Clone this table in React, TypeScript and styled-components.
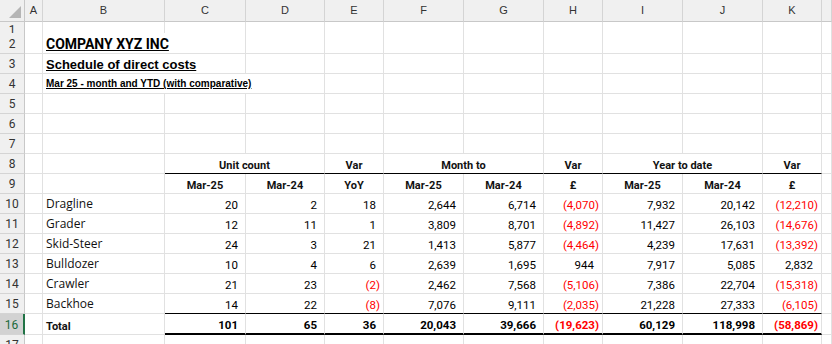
import React from "react";
import styled, { createGlobalStyle, css } from "styled-components";

const COLS = "25px 18px 122px 81px 79px 59px 80px 80px 59px 80px 80px 59px 1fr";
const GRID = "#e1e1e1";
const HEAD_LINE = "#d4d4d4";
const RED = "#ff0000";
const NARROW = `Roboto, "Liberation Sans", Arial, sans-serif`;
const SANS = `"Liberation Sans", Arial, sans-serif`;
const LABEL = `"Open Sans", "Noto Sans", sans-serif`;

const Global = createGlobalStyle`
  html, body { margin: 0; padding: 0; background: #fff; }
  body { overflow: hidden; }
`;

const Sheet = styled.div`
  width: 832px;
  height: 344px;
  overflow: hidden;
  background: #fff;
  display: flex;
  flex-direction: column;
`;

const Row = styled.div<{ $h: number }>`
  display: grid;
  grid-template-columns: ${COLS};
  height: ${(p) => p.$h}px;
  flex: none;
  overflow: hidden;
`;

const Corner = styled.div`
  box-sizing: border-box;
  background: #f0f0f0;
  border-right: 1px solid #c8c8c8;
  border-bottom: 1px solid #c8c8c8;
  display: flex;
  align-items: flex-end;
  justify-content: flex-end;
  padding: 0 3px 3px 0;
`;

const ColHead = styled.div`
  box-sizing: border-box;
  background: #f0f0f0;
  border-right: 1px solid ${HEAD_LINE};
  border-bottom: 1px solid #c8c8c8;
  display: flex;
  align-items: center;
  justify-content: center;
  font-family: ${SANS};
  font-size: 11px;
  line-height: 21px;
  color: #333;
`;

const RowHead = styled.div<{ $active?: boolean; $pb?: number }>`
  box-sizing: border-box;
  background: ${(p) => (p.$active ? "#d2d2d2" : "#f0f0f0")};
  border-right: ${(p) => (p.$active ? "2px solid #217346" : "1px solid #c8c8c8")};
  border-bottom: 1px solid ${HEAD_LINE};
  display: flex;
  align-items: flex-end;
  justify-content: center;
  padding-bottom: ${(p) => p.$pb ?? 1}px;
  font-family: ${NARROW};
  font-size: 12px;
  line-height: 16px;
  color: ${(p) => (p.$active ? "#1b6a3c" : "#333")};
`;

type Rule = "thin" | "thick";

const Cell = styled.div<{ $span?: number; $rule?: Rule }>`
  box-sizing: border-box;
  grid-column: span ${(p) => p.$span ?? 1};
  border-right: 1px solid ${GRID};
  border-bottom: 1px solid ${GRID};
  display: flex;
  align-items: flex-end;
  min-width: 0;
  white-space: nowrap;
  ${(p) => p.$rule === "thin" && css`border-bottom-color: #000;`}
  ${(p) => p.$rule === "thick" && css`border-bottom: 2px solid #000;`}
`;

const Title = styled(Cell)<{ $size: number; $lh: number; $narrow?: boolean; $pb?: number }>`
  overflow: visible;
  padding: 0 0 ${(p) => p.$pb ?? 0}px 3px;
  font-family: ${(p) => (p.$narrow ? NARROW : SANS)};
  font-weight: 700;
  font-size: ${(p) => p.$size}px;
  line-height: ${(p) => p.$lh}px;
  color: #000;
  text-decoration: underline;
  text-underline-offset: 1px;
`;

const Label = styled(Cell)<{ $bold?: boolean }>`
  padding: 0 0 ${(p) => (p.$bold ? 0 : 2)}px 3px;
  font-family: ${(p) => (p.$bold ? NARROW : LABEL)};
  font-weight: ${(p) => (p.$bold ? 700 : 400)};
  font-size: ${(p) => (p.$bold ? 11 : 12)}px;
  line-height: 15px;
  color: #111;
`;

const Head = styled(Cell)`
  justify-content: center;
  font-family: ${NARROW};
  font-weight: 700;
  font-size: 11px;
  line-height: 15px;
  color: #111;
`;

const Num = styled(Cell)<{ $neg?: boolean; $pad: number; $bold?: boolean }>`
  justify-content: flex-end;
  padding-right: ${(p) => p.$pad}px;
  font-family: ${NARROW};
  font-weight: ${(p) => (p.$bold ? 700 : 400)};
  font-size: 11.5px;
  line-height: 15px;
  color: ${(p) => (p.$neg ? RED : "#000")};
`;

const Triangle = () => (
  <svg width="12" height="12" viewBox="0 0 12 12">
    <polygon points="12,0 12,12 0,12" fill="#b5b5b5" />
  </svg>
);

const LETTERS = ["A", "B", "C", "D", "E", "F", "G", "H", "I", "J", "K", ""];

const fmt = (n: number) => {
  const s = Math.abs(n).toLocaleString("en-US");
  return n < 0 ? `(${s})` : s;
};

const DATA: { name: string; v: number[] }[] = [
  { name: "Dragline", v: [20, 2, 18, 2644, 6714, -4070, 7932, 20142, -12210] },
  { name: "Grader", v: [12, 11, 1, 3809, 8701, -4892, 11427, 26103, -14676] },
  { name: "Skid-Steer", v: [24, 3, 21, 1413, 5877, -4464, 4239, 17631, -13392] },
  { name: "Bulldozer", v: [10, 4, 6, 2639, 1695, 944, 7917, 5085, 2832] },
  { name: "Crawler", v: [21, 23, -2, 2462, 7568, -5106, 7386, 22704, -15318] },
  { name: "Backhoe", v: [14, 22, -8, 7076, 9111, -2035, 21228, 27333, -6105] },
];
const TOTAL = [101, 65, 36, 20043, 39666, -19623, 60129, 118998, -58869];

const padFor = (i: number, n: number) => {
  if (n < 0) return 3;
  if (i === 5 || i === 8) return 8;
  return 7;
};

const Blank = ({ count, rule }: { count: number; rule?: Rule }) => (
  <>
    {Array.from({ length: count }, (_, i) => (
      <Cell key={i} $rule={rule} />
    ))}
  </>
);

const EmptyRow = ({ n, h, pb }: { n: number; h: number; pb?: number }) => (
  <Row $h={h}>
    <RowHead $pb={pb}>{n}</RowHead>
    <Blank count={12} />
  </Row>
);

const NumCells = ({ v, bold, rule }: { v: number[]; bold?: boolean; rule?: Rule }) => (
  <>
    {v.map((n, i) => (
      <Num key={i} $neg={n < 0} $pad={padFor(i, n)} $bold={bold} $rule={rule}>
        {fmt(n)}
      </Num>
    ))}
  </>
);

export default function App() {
  return (
    <>
      <Global />
      <Sheet>
        <Row $h={22}>
          <Corner>
            <Triangle />
          </Corner>
          {LETTERS.map((l, i) => (
            <ColHead key={i}>{l}</ColHead>
          ))}
        </Row>

        <EmptyRow n={1} h={11} pb={4} />

        <Row $h={21}>
          <RowHead>2</RowHead>
          <Cell />
          <Title $span={2} $size={14} $lh={18} $narrow>
            COMPANY XYZ INC
          </Title>
          <Blank count={9} />
        </Row>

        <Row $h={20}>
          <RowHead>3</RowHead>
          <Cell />
          <Title $span={2} $size={13} $lh={17}>
            Schedule of direct costs
          </Title>
          <Blank count={9} />
        </Row>

        <Row $h={20}>
          <RowHead>4</RowHead>
          <Cell />
          <Title $span={3} $size={10} $lh={17} $pb={1}>
            Mar 25 - month and YTD (with comparative)
          </Title>
          <Blank count={8} />
        </Row>

        <EmptyRow n={5} h={20} />
        <EmptyRow n={6} h={20} />
        <EmptyRow n={7} h={20} />

        <Row $h={20}>
          <RowHead>8</RowHead>
          <Blank count={2} />
          <Head $span={2} $rule="thin">Unit count</Head>
          <Head $rule="thin">Var</Head>
          <Head $span={2} $rule="thin">Month to</Head>
          <Head $rule="thin">Var</Head>
          <Head $span={2} $rule="thin">Year to date</Head>
          <Head $rule="thin">Var</Head>
          <Cell />
        </Row>

        <Row $h={20}>
          <RowHead>9</RowHead>
          <Blank count={2} />
          {["Mar-25", "Mar-24", "YoY", "Mar-25", "Mar-24", "£", "Mar-25", "Mar-24", "£"].map((t, i) => (
            <Head key={i}>{t}</Head>
          ))}
          <Cell />
        </Row>

        {DATA.map((r, idx) => (
          <Row $h={20} key={r.name}>
            <RowHead>{10 + idx}</RowHead>
            <Cell />
            <Label>{r.name}</Label>
            <NumCells v={r.v} rule={idx === DATA.length - 1 ? "thin" : undefined} />
            <Cell />
          </Row>
        ))}

        <Row $h={21}>
          <RowHead $active>16</RowHead>
          <Cell />
          <Label $bold>Total</Label>
          <NumCells v={TOTAL} bold rule="thick" />
          <Cell />
        </Row>

        <EmptyRow n={17} h={20} />
      </Sheet>
    </>
  );
}
